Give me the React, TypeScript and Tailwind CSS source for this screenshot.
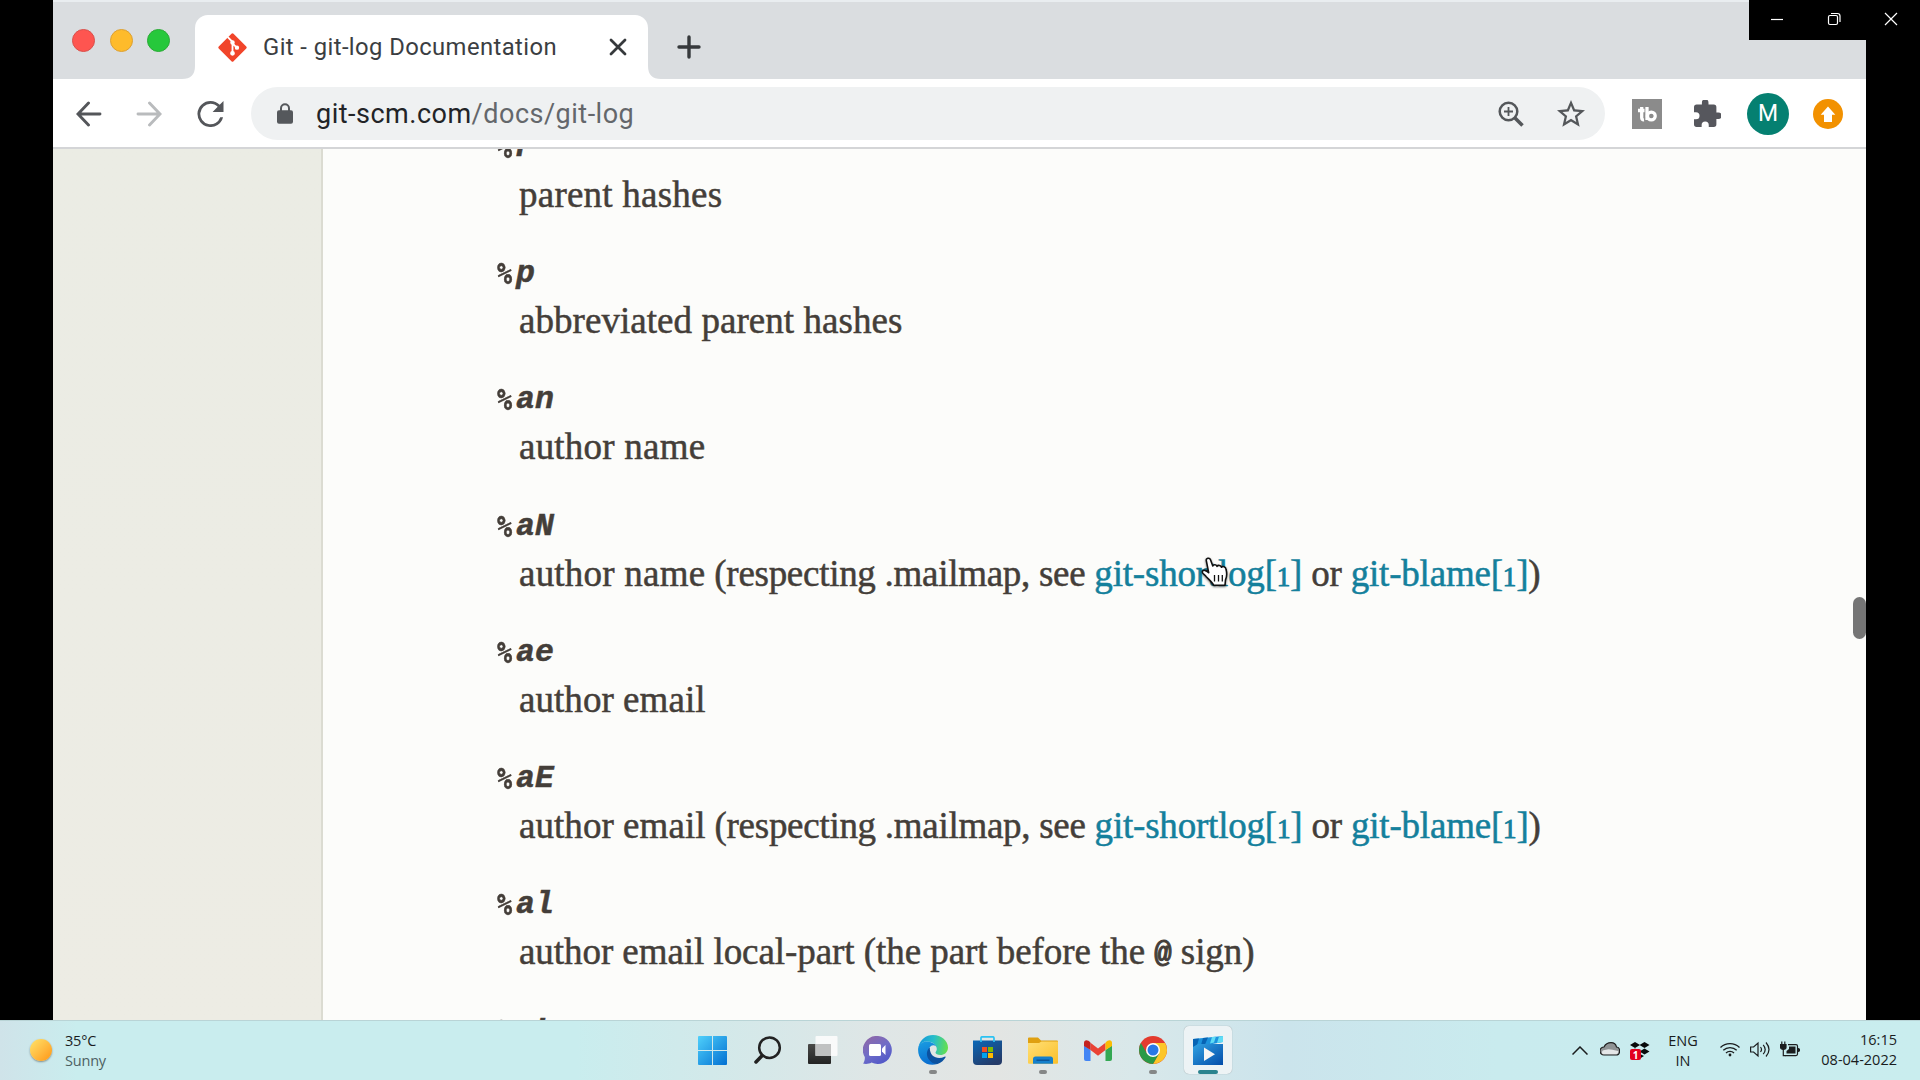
import type { ReactNode } from "react";

function GitLogo() {
  return (
    <svg viewBox="0 0 32 32" className="h-[31px] w-[31px]">
      <rect x="5.2" y="5.2" width="21.6" height="21.6" rx="1.500" fill="#f1452a" transform="rotate(45 16 16)" />
      <g stroke="#fff" strokeWidth="1.9" fill="#fff" strokeLinecap="round">
        <path d="M11.4 5.6 16 10.3V22M16 11.8l4.4 4.4" fill="none" />
        <circle cx="16" cy="10.8" r="1.4" />
        <circle cx="16" cy="22" r="1.5" />
        <circle cx="20.6" cy="16.2" r="1.3" />
      </g>
    </svg>
  );
}

function TabStrip() {
  return (
    <div className="flex h-[79px] border-t-2 border-[#e9edf0] bg-[#dadde0]">
      <div className="flex w-[129px] gap-[14.5px] pt-[27px] pl-[19px]">
        <span className="h-[23px] w-[23px] rounded-full border border-[#d9504b] bg-[#fe5550]" />
        <span className="h-[23px] w-[23px] rounded-full border border-[#dca033] bg-[#febb2b]" />
        <span className="h-[23px] w-[23px] rounded-full border border-[#2baa36] bg-[#26c83b]" />
      </div>
      <svg viewBox="0 0 13 13" className="mt-[64px] h-[13px] w-[13px]">
        <path d="M13 0Q13 13 0 13H13Z" fill="#fff" />
      </svg>
      <div className="mt-[13px] flex h-[64px] w-[453px] items-center rounded-t-[13px] bg-white pl-[22px]">
        <GitLogo />
        <span className="ml-[15px] w-[334px] pt-px font-['Roboto',sans-serif] text-[23.8px] tracking-[0.42px] whitespace-nowrap text-[#3b3e42]">
          Git - git-log Documentation
        </span>
        <svg viewBox="0 0 18 18" className="ml-[12px] h-[18px] w-[18px]" stroke="#36393c" strokeWidth="2.800" strokeLinecap="round">
          <path d="M2 2 16 16M16 2 2 16" />
        </svg>
      </div>
      <svg viewBox="0 0 13 13" className="mt-[64px] h-[13px] w-[13px]">
        <path d="M0 0Q0 13 13 13H0Z" fill="#fff" />
      </svg>
      <svg viewBox="0 0 24 24" className="mt-[33px] ml-[16px] h-[24px] w-[24px]" stroke="#36393c" strokeWidth="3.400" strokeLinecap="round">
        <path d="M12 2V22M2 12H22" />
      </svg>
    </div>
  );
}

function Arrow({ color, flip }: { color: string; flip?: boolean }) {
  return (
    <svg viewBox="0 0 26 26" className={flip ? "h-[26px] w-[26px] -scale-x-100" : "h-[26px] w-[26px]"} fill="none" stroke={color} strokeWidth="2.900" strokeLinecap="round">
      <path d="M24 13H2.5M12.500 2 2 13 12.500 24" />
    </svg>
  );
}

function Toolbar() {
  return (
    <div className="flex h-[70px] items-center border-b-2 border-[#d4d5d7] bg-white pt-px pl-[23px]">
      <Arrow color="#54565a" />
      <div className="ml-[34px]">
        <Arrow color="#b9bbbd" flip />
      </div>
      <svg viewBox="4 4 16 16" className="ml-[35px] h-[26px] w-[27px]" fill="#54565a">
        <path d="M17.65 6.35A7.96 7.96 0 0 0 12 4a8 8 0 1 0 7.73 10h-1.75A6.3 6.3 0 1 1 12 5.700c1.740 0 3.300.720 4.440 1.860L13.300 10.700H20V4Z" />
      </svg>
      <div className="ml-[27px] flex h-[53px] w-[1354px] items-center rounded-full bg-[#eff1f2] pl-[26px]">
        <svg viewBox="0 0 16 21" className="h-[21px] w-[16px]">
          <path d="M4 9V5.200a4 4 0 0 1 8 0V9" fill="none" stroke="#55585c" strokeWidth="2" />
          <rect x="0" y="7.3" width="16" height="13.5" rx="2" fill="#55585c" />
        </svg>
        <span className="ml-[23px] w-[1182px] pt-[2px] font-['Roboto',sans-serif] text-[27px] tracking-[0.5px] text-[#64676b]">
          <span className="text-[#222427]">git-scm.com</span>/docs/git-log
        </span>
        <svg viewBox="0 0 26 26" className="h-[26px] w-[26px]" fill="none" stroke="#54575a">
          <circle cx="10.500" cy="10.500" r="8.8" strokeWidth="2.500" />
          <path d="m17 17 7.500 7.500" strokeWidth="3.600" />
          <path d="M10.500 6v9M6 10.500h9" strokeWidth="1.800" />
        </svg>
        <svg viewBox="2 2 20 19.2" className="ml-[33px] h-[27px] w-[28px]" fill="#54575a">
          <path d="m22 9.240-7.190-.62L12 2 9.190 8.630 2 9.240l5.460 4.730L5.820 21 12 17.270 18.180 21l-1.630-7.030L22 9.240ZM12 15.400l-3.760 2.270 1-4.280-3.320-2.880 4.380-.38L12 6.100l1.710 4.040 4.380.38-3.320 2.880 1 4.280L12 15.400Z" />
        </svg>
      </div>
      <svg viewBox="0 0 30 30" className="ml-[27px] h-[30px] w-[30px]">
        <rect width="30" height="30" fill="#8b8b8b" />
        <path d="M6 11.500h6.500M9.700 8v10.500q0 2.500 2.300 2.300M15 8v13" stroke="#fff" strokeWidth="3.300" fill="none" />
        <circle cx="19.300" cy="17" r="3.900" fill="none" stroke="#fff" strokeWidth="3.300" />
        <path d="m18 14.800 3.800 2.200-3.800 2.200Z" fill="#8b8b8b" />
      </svg>
      <svg viewBox="2 1.5 20.5 20.5" className="ml-[32px] h-[27px] w-[27px]" fill="#56575d">
        <path d="M20.500 11H19V7a2 2 0 0 0-2-2h-4V3.500a2.500 2.500 0 0 0-5 0V5H4a2 2 0 0 0-2 2v3.800h1.500a2.700 2.700 0 0 1 0 5.400H2V20a2 2 0 0 0 2 2h3.800v-1.500a2.700 2.700 0 0 1 5.400 0V22H17a2 2 0 0 0 2-2v-4h1.500a2.500 2.500 0 0 0 0-5Z" />
      </svg>
      <span className="ml-[26px] flex h-[42px] w-[42px] items-center justify-center rounded-full bg-[#058071] pt-px font-['Roboto',sans-serif] text-[23px] text-white">M</span>
      <svg viewBox="0 0 30 30" className="ml-[24px] h-[30px] w-[30px]">
        <circle cx="15" cy="15" r="15" fill="#f29100" />
        <path d="m15 7.500 7.300 8.300H19V23h-8v-7.200H7.700Z" fill="#fff" />
      </svg>
    </div>
  );
}

function GitLink({ children }: { children: ReactNode }) {
  return (
    <span className="text-[#14809c]">
      {children}[<span className="text-[27px] [-webkit-text-stroke:0.9px]">1</span>]
    </span>
  );
}

function Respecting({ lead }: { lead: ReactNode }) {
  return (
    <>
      {lead}
      <span className="tracking-[-0.28px]"> (respecting .mailmap, see </span>
      <span className="tracking-[-0.2px]">
        <GitLink>git-shortlog</GitLink> or <GitLink>git-blame</GitLink>)
      </span>
    </>
  );
}

const authorName = <span className="tracking-[0.22px]">author name</span>;
const authorEmail = <span className="tracking-[0.05px]">author email</span>;

const entries: { term: string; description?: ReactNode }[] = [
  { term: "P", description: <span className="tracking-[0.23px]">parent hashes</span> },
  { term: "p", description: <span className="tracking-[0.05px]">abbreviated parent hashes</span> },
  { term: "an", description: authorName },
  { term: "aN", description: <Respecting lead={authorName} /> },
  { term: "ae", description: authorEmail },
  { term: "aE", description: <Respecting lead={authorEmail} /> },
  {
    term: "al",
    description: (
      <span className="tracking-[-0.06px]">
        author email local-part (the part before the{" "}
        <span className="relative -top-[2px] font-['Liberation_Mono',monospace] text-[29px] font-bold [-webkit-text-stroke:1px]">@</span> sign)
      </span>
    ),
  },
  { term: "aL" },
];

function HandCursor() {
  return (
    <svg viewBox="0 0 29 31" className="absolute top-[408px] left-[1148px] h-[31px] w-[29px] drop-shadow-[0_1px_1px_rgba(0,0,0,0.5)]">
      <path
        d="M5.300 3.600C4.700 1.200 8.600.2 9.500 2.800L11.800 9C12.500 7.200 15.500 7.400 16 9.400C17 7.700 20 8.300 20.500 10.300C21.600 8.800 24.800 9.600 25 12.200C26 16 26.500 18.500 24.500 22.800L24 28.200H12.700C11.500 25.500 8 22.600 5.300 19.700C3.500 17.500 1 16.500 1.300 14.700C1.800 12.500 5.200 13 7.700 15.700Z"
        fill="#fff"
        stroke="#111"
        strokeWidth="1.6"
        strokeLinejoin="round"
      />
      <path d="M13.500 18v6.500M17.500 18v6.500M21.300 18v6.500" stroke="#111" strokeWidth="1.3" />
    </svg>
  );
}

function Page() {
  return (
    <div className="relative flex h-[871px] overflow-hidden bg-[#fcfcfa]">
      <div className="w-[270px] shrink-0 border-r-2 border-[#dbdbd1] bg-linear-to-b from-[#ebece4] to-[#edece4]" />
      <dl className="-mt-[21px] pl-[174px] font-['Liberation_Serif',serif] text-[37px] whitespace-nowrap text-[#443e39]">
        {entries.map((entry) => (
          <div key={entry.term} className="mb-[34.200px]">
            <dt className="flex h-[42px] font-['Liberation_Mono',monospace] text-[31.500px] leading-[40px] font-bold italic [-webkit-text-stroke:0.5px]">
              <span className="w-[19px] origin-left scale-x-[0.85] font-['DejaVu_Sans_Mono',monospace] text-[29.500px]">%</span>
              <span>{entry.term}</span>
            </dt>
            <dd className="h-[50px] pl-[22px] leading-[50px] [-webkit-text-stroke:0.5px]">{entry.description}</dd>
          </div>
        ))}
      </dl>
      <HandCursor />
      <div className="absolute top-[448px] right-0 h-[42px] w-[13px] rounded-full bg-[#757575]" />
    </div>
  );
}

function WindowControls() {
  return (
    <div className="absolute top-0 right-0 flex h-[40px] w-[171px] items-center bg-black">
      <svg viewBox="0 0 171 40" className="h-[40px] w-[171px]" fill="none" stroke="#fff" strokeWidth="1.2">
        <path d="M22 19.500H34" />
        <rect x="79.500" y="15.500" width="9" height="9" rx="1.500" />
        <path d="M82 13.500h6.500a2.500 2.500 0 0 1 2.500 2.500V22" />
        <path d="m136 13 12 12M148 13l-12 12" />
      </svg>
    </div>
  );
}

function StartIcon() {
  return (
    <svg viewBox="0 0 29 29" className="h-[29px] w-[29px]">
      <linearGradient id="start" x1="0" y1="0" x2="29" y2="29" gradientUnits="userSpaceOnUse">
        <stop stopColor="#4fd0fb" />
        <stop offset="1" stopColor="#0270d2" />
      </linearGradient>
      <path d="M0 1q0-1 1-1h13v14H0ZM15 0h13q1 0 1 1v13H15ZM0 15h14v14H1q-1 0-1-1ZM15 15h14v13q0 1-1 1H15Z" fill="url(#start)" />
    </svg>
  );
}

function SearchIcon() {
  return (
    <svg viewBox="0 0 28 28" className="h-[28px] w-[28px]" fill="none" stroke="#222" strokeLinecap="round">
      <circle cx="15.500" cy="11.700" r="10.300" strokeWidth="2.500" />
      <path d="M8 19.800 2 26" strokeWidth="3.500" />
    </svg>
  );
}

function TaskViewIcon() {
  return (
    <svg viewBox="0 0 30 28" className="h-[28px] w-[30px]">
      <linearGradient id="tv" x1="0" y1="0" x2="0" y2="1">
        <stop stopColor="#4a4a48" />
        <stop offset="1" stopColor="#232323" />
      </linearGradient>
      <rect y="8" width="23" height="20" rx="1" fill="url(#tv)" />
      <rect x="7.500" width="22" height="20" rx="1" fill="#fbfbfb" fillOpacity=".95" />
      <rect x="7.500" y="8" width="15.500" height="12" fill="#c0c1c1" />
    </svg>
  );
}

function ChatIcon() {
  return (
    <svg viewBox="0 0 29 28" className="h-[28px] w-[29px]">
      <linearGradient id="chat" x1=".2" y1="0" x2=".8" y2="1">
        <stop stopColor="#8f68a8" />
        <stop offset=".5" stopColor="#6f6dc8" />
        <stop offset="1" stopColor="#4d55c8" />
      </linearGradient>
      <path d="M15 0a14 14 0 1 1-6.500 26.500C6 28 2.500 28.300 0 27.500c1.400-1.700 2-4 1.800-6.500A14 14 0 0 1 15 0Z" fill="url(#chat)" />
      <rect x="6" y="8" width="12" height="12" rx="1.500" fill="#fff" />
      <path d="m19 12.500 3.500-3.500v10L19 15.500Z" fill="#fff" />
    </svg>
  );
}

function EdgeIcon() {
  return (
    <svg viewBox="0 0 30 30" className="h-[30px] w-[30px]">
      <linearGradient id="edgeTop" x1="0" y1=".4" x2="1" y2=".5">
        <stop stopColor="#1496dc" />
        <stop offset=".5" stopColor="#27bec9" />
        <stop offset="1" stopColor="#66e04c" />
      </linearGradient>
      <linearGradient id="edgeLeft" x1="0" y1="0" x2=".3" y2="1">
        <stop stopColor="#1a9ee2" />
        <stop offset="1" stopColor="#0a6fd0" />
      </linearGradient>
      <path d="M.5 12C2 4.500 8 0 15 0c8.500 0 15 6 15 12.500 0 5-4 7.500-7.500 7.500-3 0-5-1.200-5-2.500 0-.8 1.300-1.500 1.300-3.500C18.800 10 14.500 6.500 9 6.500c-4 0-7 2-8.500 5.500Z" fill="url(#edgeTop)" />
      <path d="M.2 13C1 8.500 5 6.300 9.200 6.500c5.300.2 9.600 3.500 9.600 7 0-2-1.700-3.200-3.600-3.200-2.700 0-4.700 3.200-4.700 7 0 6.700 5.500 11.200 9 11.700C8 32.500-1 24 .2 13Z" fill="url(#edgeLeft)" />
      <path d="M11.800 12.500C8.500 15 8 20 10.500 24c2 3.300 6 5.300 9 5 4-1.500 6.500-4 8-6.500.4-.8-.3-1.200-1-.8C20 25 11.500 22 11.800 12.500Z" fill="#0c52a0" />
      <path d="M18.800 13.500c0 2-1.300 2.700-1.300 4 0 1.300 2 2.500 5 2.500 1.500 0 3-.4 4.500-1.300l-.5 3C20 25 11.500 22 11.800 12.500c.8-1.400 2-2.200 3.400-2.200 2 0 3.600 1.200 3.600 3.200Z" fill="#e6efed" fillOpacity=".0" />
    </svg>
  );
}

function StoreIcon() {
  return (
    <svg viewBox="0 0 29 29" className="h-[29px] w-[29px]">
      <linearGradient id="store" x1="0" y1="0" x2=".6" y2="1">
        <stop stopColor="#0a68b8" />
        <stop offset="1" stopColor="#243b69" />
      </linearGradient>
      <path d="M0 4.500h29V25q0 4-4 4H4q-4 0-4-4Z" fill="url(#store)" />
      <path d="M8 6V2q0-1.200 1.200-1.200h10.600Q21 .8 21 2v4" fill="none" stroke="#2cc2f2" strokeWidth="1.700" />
      <path d="M9 11h5v5H9Z" fill="#f25022" />
      <path d="M15 11h5v5h-5Z" fill="#7fba00" />
      <path d="M9 17h5v5H9Z" fill="#00a4ef" />
      <path d="M15 17h5v5h-5Z" fill="#ffb900" />
    </svg>
  );
}

function FolderIcon() {
  return (
    <svg viewBox="0 0 30 27" className="h-[27px] w-[30px]">
      <linearGradient id="folder" x1="0" y1="0" x2="1" y2="1">
        <stop stopColor="#ffdf76" />
        <stop offset="1" stopColor="#fbc02a" />
      </linearGradient>
      <path d="M0 1.500Q0 .5 1 .5h9l3 3h16q1 0 1 1V12H0Z" fill="#dfa011" />
      <path d="M0 6h11l2.500-1.500H30V26q0 .8-1 .8H1q-1 0-1-1Z" fill="url(#folder)" />
      <path d="M5 26.800V22q0-2.500 2.500-2.500h15Q25 19.500 25 22v4.800Z" fill="#1580cc" />
      <path d="M8.500 23.200h13" stroke="#0b4f91" strokeWidth="1.300" />
    </svg>
  );
}

function GmailIcon() {
  return (
    <svg viewBox="0 0 28 21" className="h-[21px] w-[28px]">
      <path d="M0 5.500 6.500 10v11H2q-2 0-2-2Z" fill="#4285f4" />
      <path d="M28 5.500 21.500 10v11H26q2 0 2-2Z" fill="#34a853" />
      <path d="M6.500 2.800 14 8.500l7.500-5.700V10L14 15.800 6.500 10Z" fill="#ea4335" />
      <path d="M0 3C0 0 3.500-1 6.500 2.800V10L0 6Z" fill="#c5221f" />
      <path d="M28 3c0-3-3.500-4-6.500-.2V10L28 6Z" fill="#fbbc04" />
    </svg>
  );
}

function ChromeIcon() {
  return (
    <svg viewBox="0 0 28 28" className="h-[28px] w-[28px]">
      <circle cx="14" cy="14" r="14" fill="#e33b2e" />
      <path d="M26.120 7A14 14 0 0 1 14 28l6.100-10.500L14 7Z" fill="#fcc629" />
      <path d="M14 28A14 14 0 0 1 1.880 7L8 17.500l12.100 0Z" fill="#2a9a47" />
      <circle cx="14" cy="14" r="7" fill="#fff" />
      <circle cx="14" cy="14" r="5.500" fill="#2a78e6" />
    </svg>
  );
}

function MoviesIcon() {
  return (
    <svg viewBox="0 0 30 30" className="h-[30px] w-[30px]">
      <linearGradient id="movies" x1="0" y1="0" x2="1" y2="1">
        <stop stopColor="#31a2e2" />
        <stop offset="1" stopColor="#034ca9" />
      </linearGradient>
      <path d="M0 4 30 1v6L4 12 0 13Z" fill="#1c93dd" />
      <path d="m0 4 6-.6-2 7-4 2ZM10 3l5-.5-3 7-4 .5Z" fill="#0764b4" />
      <path d="m19 2 4-.4-2 6-4 .8ZM26 1.400l4-.4v6l-6 1Z" fill="#5fdcf5" />
      <path d="M0 12 5 9h25v21H0Z" fill="url(#movies)" />
      <path d="m11 12.500 11 6.800-11 6.700Z" fill="#f5f5f5" />
    </svg>
  );
}

const apps: { name: string; icon: ReactNode; state?: "open" | "active" }[] = [
  { name: "start", icon: <StartIcon /> },
  { name: "search", icon: <SearchIcon /> },
  { name: "task-view", icon: <TaskViewIcon /> },
  { name: "chat", icon: <ChatIcon /> },
  { name: "edge", icon: <EdgeIcon />, state: "open" },
  { name: "store", icon: <StoreIcon /> },
  { name: "explorer", icon: <FolderIcon />, state: "open" },
  { name: "gmail", icon: <GmailIcon /> },
  { name: "chrome", icon: <ChromeIcon />, state: "open" },
  { name: "movies", icon: <MoviesIcon />, state: "active" },
];

function Taskbar() {
  return (
    <div className="flex h-[60px] border-t border-[#b9d4d6] bg-[linear-gradient(90deg,#cfe3e9_0%,#c9edee_4%,#c9edee_30%,#d2e9ea_37%,#dfe6e6_46%,#e3e5e3_52%,#d9e8ea_59%,#cbe4ec_67%,#c9ebee_78%,#c9edee_100%)] font-['Open_Sans','Noto_Sans',sans-serif] text-[14.500px] leading-[20px] text-[#191c1d]">
      <div className="flex w-[685px] pl-[30px]">
        <span className="mt-[18px] h-[22px] w-[22px] rounded-full bg-linear-to-br from-[#ffe468] to-[#ff9500] shadow-[0_1px_2px_rgba(0,0,0,0.4)]" />
        <div className="mt-[10px] ml-[13px] tracking-[-0.2px]">
          <div>35°C</div>
          <div className="text-[#4d6163]">Sunny</div>
        </div>
      </div>
      {apps.map((app) => (
        <div key={app.name} className="flex w-[55px] shrink-0 justify-center pt-[5px]">
          <div
            className={
              app.state === "active"
                ? "relative flex h-[48px] w-[48px] items-center justify-center rounded-[5px] bg-[#edf3f5] shadow-[0_0_1px_rgba(0,0,0,0.35)]"
                : "relative flex h-[48px] w-[48px] items-center justify-center"
            }
          >
            {app.icon}
            {app.state === "open" && <span className="absolute bottom-0 left-[20px] h-[4px] w-[8px] rounded-full bg-[#858787]" />}
            {app.state === "active" && <span className="absolute bottom-0 left-[14px] h-[4px] w-[20px] rounded-full bg-[#2a838e]" />}
          </div>
        </div>
      ))}
      <svg viewBox="0 0 16 9" className="mt-[25px] ml-[337px] h-[9px] w-[16px]" fill="none" stroke="#1b1d1e" strokeWidth="1.500">
        <path d="m.5 8.500 7.500-7.500 7.500 7.500" />
      </svg>
      <svg viewBox="0 0 20 14" className="mt-[21px] ml-[12px] h-[14px] w-[20px]">
        <path d="M4 13a4 4 0 0 1 0-8C5.500 2 8 .700 11 .700c2.700 0 5 1.800 5.500 4.300C21 5.500 20.500 13 16 13Z" fill="#8f9394" stroke="#1d1d1d" strokeWidth="1.200" />
        <path d="M3 12.300c-1.500-.5-1.500-3.300.5-4l5-1 4 .5 5.500 1.200c1 1-.5 3.300-2 3.300Z" fill="#e4e6e7" />
      </svg>
      <div className="relative mt-[20px] ml-[10px] h-[20px] w-[20px]">
        <svg viewBox="0 0 20 20" className="h-[20px] w-[20px]" fill="#08090a">
          <path d="m5 1 5 3-5 3-5-3ZM14.500 1l5 3-5 3-5-3ZM5 7.500l5 3-5 3-5-3ZM14.500 7.500l5 3-5 3-5-3ZM10 13l4 2-4 2.500Z" />
        </svg>
        <span className="absolute top-[8px] left-0 flex h-[11px] w-[11px] items-center justify-center rounded-[2px] bg-[#e2001f] text-[10px] leading-none font-bold text-white">1</span>
      </div>
      <div className="mt-[10px] ml-[15px] w-[36px] text-center">
        <div>ENG</div>
        <div>IN</div>
      </div>
      <svg viewBox="0 0 20 15" className="mt-[21px] ml-[19px] h-[15px] w-[20px]" fill="none" stroke="#1b1d1e" strokeWidth="1.300">
        <path d="M.5 5.500a13.400 13.400 0 0 1 19 0M3.300 8.300a9.500 9.500 0 0 1 13.400 0M6 11a5.700 5.700 0 0 1 8 0" />
        <circle cx="10" cy="13" r="1.400" fill="#1b1d1e" stroke="none" />
      </svg>
      <svg viewBox="0 0 20 17" className="mt-[20px] ml-[10px] h-[17px] w-[20px]" fill="none" stroke="#1b1d1e" strokeWidth="1.200">
        <path d="M.6 6v5h3l4.400 4V2L3.600 6ZM10.500 6q2 2.500 0 5M13.200 3.800q4 4.700 0 9.400M16 1.500q6 7 0 14" />
      </svg>
      <svg viewBox="0 0 20 16" className="mt-[20px] ml-[10px] h-[16px] w-[20px]" fill="none" stroke="#1b1d1e" strokeWidth="1.200">
        <path d="M8 3.600H16q1.500 0 1.500 1.500v8q0 1.500-1.500 1.500H5.500" />
        <path d="M9 5.500H15.500v7H6.500V10L9 8Z" fill="#1b1d1e" stroke="none" />
        <path d="M18 7.500q1.500 0 1.500 1.500T18 10.500M.6 3.500h5.400v3q0 1.800-2.700 1.800T.6 6.500ZM1.800 3V.500M4.800 3V.500" fill="#1b1d1e" />
        <path d="M3.300 8v6.600H6" />
      </svg>
      <div className="mt-[9px] w-[97px] text-right whitespace-nowrap">
        <div>16:15</div>
        <div>08-04-2022</div>
      </div>
    </div>
  );
}

export default function App() {
  return (
    <div className="relative h-[1080px] w-[1920px] overflow-hidden bg-black">
      <div className="ml-[53px] w-[1813px]">
        <TabStrip />
        <Toolbar />
        <Page />
      </div>
      <Taskbar />
      <WindowControls />
    </div>
  );
}
